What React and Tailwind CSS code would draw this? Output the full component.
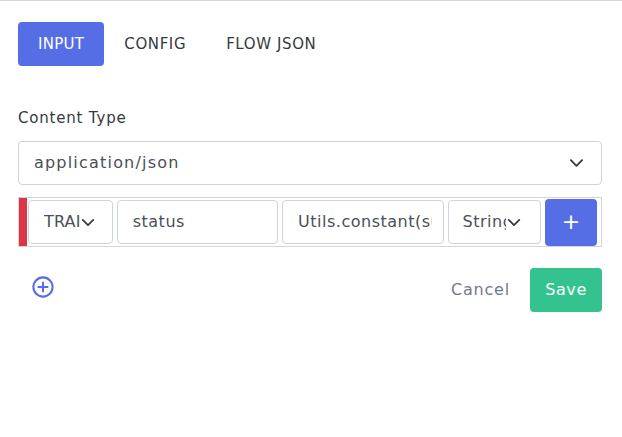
import React, { useState } from "react";

const Chevron = ({ className }) => (
  <svg viewBox="0 0 16 10" className={className} fill="none" stroke="currentColor" strokeWidth="2" strokeLinecap="round" strokeLinejoin="round">
    <path d="M2 2l6 6 6-6" />
  </svg>
);

const App = () => {
  const [tab, setTab] = useState("INPUT");
  const tabs = ["INPUT", "CONFIG", "FLOW JSON"];

  return (
    <div
      className="min-h-screen w-[622px] bg-white border-t border-[#d4d4d4] text-[#495057] tracking-[0.5px]"
      style={{ fontFamily: "'DejaVu Sans', 'Open Sans', sans-serif" }}
    >
      {/* Tabs */}
      <div className="flex pt-[21px] pl-[18px]">
        {tabs.map((t) => (
          <button
            key={t}
            onClick={() => setTab(t)}
            className={
              tab === t
                ? "h-[44px] px-5 rounded-[4px] bg-[#556ee6] text-white text-[15px] tracking-[0.3px]"
                : "h-[44px] px-5 rounded-[4px] text-[#343a40] text-[15px] tracking-[0.6px]"
            }
          >
            {t}
          </button>
        ))}
      </div>

      <div className="px-[18px] w-[620px]">
        {/* Content Type */}
        <div className="mt-[41px] text-[15px] tracking-[0.8px] text-[#343a40] leading-[22px]">Content Type</div>
        <div className="mt-[12px] h-[44px] flex items-center justify-between border border-[#ced4da] rounded-[4px] pl-[15px] pr-[17px] text-[16px]">
          <span className="tracking-[1.2px]">application/json</span>
          <Chevron className="w-[15px] h-[10px] text-[#343a40]" />
        </div>

        {/* Row */}
        <div className="mt-[12px] h-[50px] flex items-center border border-[#d4d4d4] pr-[4px]">
          <div className="w-[8px] h-full bg-[#dc3545]" />
          <div className="ml-[1px] w-[85px] h-[44px] flex items-center border border-[#ced4da] rounded-[4px] pl-[15px] text-[16px] overflow-hidden">
            <span className="overflow-hidden whitespace-nowrap w-[36px] tracking-[0.2px]">TRAIT</span>
            <Chevron className="ml-[1px] w-[14px] h-[9px] shrink-0 text-[#343a40]" />
          </div>
          <div className="ml-[4px] w-[162px] h-[44px] flex items-center border border-[#ced4da] rounded-[4px] pl-[15px] text-[16px]">
            status
          </div>
          <div className="ml-[4px] w-[162px] h-[44px] flex items-center border border-[#ced4da] rounded-[4px] pl-[15px] text-[16px] whitespace-nowrap">
            <span className="w-[134px] overflow-hidden">Utils.constant(success)</span>
          </div>
          <div className="ml-[4px] w-[94px] h-[44px] flex items-center border border-[#ced4da] rounded-[4px] pl-[14px] text-[16px]">
            <span className="overflow-hidden whitespace-nowrap w-[43px]">String</span>
            <Chevron className="ml-[1px] w-[14px] h-[9px] shrink-0 text-[#343a40]" />
          </div>
          <button className="ml-[4px] w-[52px] h-[47px] rounded-[4px] bg-[#556ee6] text-white text-[22px] leading-none flex items-center justify-center">
            +
          </button>
        </div>

        {/* Footer */}
        <div className="mt-[21px] flex items-center justify-between">
          <svg viewBox="0 0 24 24" className="ml-[14px] mb-[6px] w-[22px] h-[22px] text-[#556ee6]" fill="none" stroke="currentColor" strokeWidth="2.2" strokeLinecap="round">
            <circle cx="12" cy="12" r="10.5" />
            <path d="M12 7v10M7 12h10" />
          </svg>
          <div className="flex items-center">
            <button className="text-[16px] tracking-[0.8px] text-[#74788d] mr-[20px]">Cancel</button>
            <button className="h-[44px] w-[72px] rounded-[4px] bg-[#34c38f] text-white text-[16px] tracking-[0.6px]">
              Save
            </button>
          </div>
        </div>
      </div>
    </div>
  );
};

export default App;
